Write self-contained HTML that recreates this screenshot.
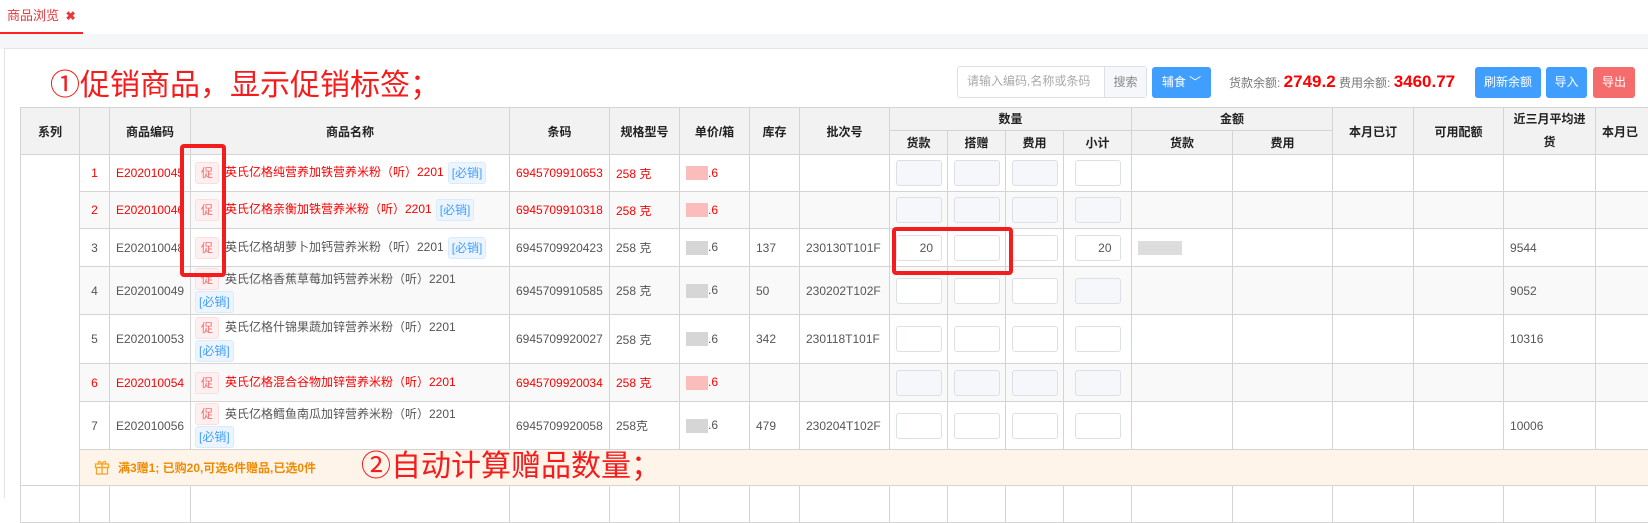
<!DOCTYPE html>
<html><head><meta charset="utf-8"><style>
*{box-sizing:border-box;margin:0;padding:0}
body{width:1648px;height:492px;overflow:hidden;background:#fff;font-family:"Liberation Sans","Noto Sans CJK SC",sans-serif;font-size:12px;color:#555;position:relative}
.abs{position:absolute}
.tab{left:7px;top:5px;color:#e8383d;font-size:13px}
.tabline{left:0;top:32px;width:83px;height:2px;background:#f22}
.band{left:0;top:34px;width:1648px;height:15px;background:#f5f6f8}
.panel{left:4px;top:48px;width:1650px;height:450px;border-left:1px solid #e3e3e3;border-top:1px solid #e3e3e3}
.ann{color:#f41c1c;font-size:30px;font-family:"Noto Sans CJK SC",sans-serif;line-height:1;white-space:nowrap}
table{position:absolute;left:20px;top:107px;border-collapse:collapse;table-layout:fixed;width:1640px}
td,th{border:1px solid #d4d4d4;padding:0 6px;white-space:nowrap;overflow:hidden;font-weight:normal;font-size:12px}
th{background:#f2f2f2;color:#222;font-weight:bold;text-align:center;height:22px}
td{height:37px}
tr.alt td{background:#f9f9f9}
tr.red td{color:#f00}
.c{text-align:center}
.cu{display:inline-block;width:24px;height:22px;line-height:20px;text-align:center;border:1px solid #fdd;background:#fef0f0;color:#f56c6c;border-radius:3px;vertical-align:middle;margin-right:6px;font-size:12px}
.bx{display:inline-block;height:22px;line-height:20px;padding:0 3px;border:1px solid #d9ecff;background:#ecf5ff;color:#409eff;border-radius:3px;vertical-align:middle;margin-left:4px}
.inp{display:block;width:46px;height:26px;border:1px solid #dcdfe6;border-radius:3px;background:#fff;text-align:right;padding-right:8px;line-height:24px;color:#555;margin:0 auto}
.g{background:#f5f7fa}
.blur{display:inline-block;width:22px;height:14px;background:#d6d6d6;vertical-align:middle}
.blurr{background:#fbbcbc}
.btn{top:67px;height:31px;line-height:31px;color:#fff;border-radius:3px;text-align:center;font-size:12px}
.rbox{border:4px solid #f41c1c;border-radius:4px}
</style></head><body>
<div class="abs tab">商品浏览 <span style="font-size:12px;font-weight:bold;margin-left:3px">✖</span></div>
<div class="abs tabline"></div>
<div class="abs band"></div>
<div class="abs panel"></div>
<div class="abs ann" style="left:50px;top:67px">①促销商品，显示促销标签；</div>

<div class="abs" style="left:957px;top:66px;width:190px;height:32px;border:1px solid #dcdfe6;border-radius:3px;background:#fff"></div>
<div class="abs" style="left:967px;top:73px;color:#aaa;font-size:12px;line-height:17px">请输入编码,名称或条码</div>
<div class="abs" style="left:1104px;top:67px;width:42px;height:30px;background:#f5f7fa;border-left:1px solid #dcdfe6;color:#888;text-align:center;line-height:30px">搜索</div>
<div class="abs btn" style="left:1152px;width:59px;background:#409eff">辅食 ﹀</div>
<div class="abs" style="left:1229px;top:73px;color:#777;white-space:nowrap;line-height:17px">货款余额: <b style="color:#f00;font-family:'Liberation Sans Narrow','Liberation Sans',sans-serif;font-size:17px">2749.2</b> 费用余额: <b style="color:#f00;font-family:'Liberation Sans Narrow','Liberation Sans',sans-serif;font-size:17px">3460.77</b></div>
<div class="abs btn" style="left:1475px;width:66px;background:#409eff">刷新余额</div>
<div class="abs btn" style="left:1546px;width:41px;background:#409eff">导入</div>
<div class="abs btn" style="left:1593px;width:42px;background:#f56c6c">导出</div>

<table>
<colgroup><col style="width:59px"><col style="width:30px"><col style="width:81px"><col style="width:319px"><col style="width:100px"><col style="width:70px"><col style="width:70px"><col style="width:50px"><col style="width:90px"><col style="width:58px"><col style="width:58px"><col style="width:58px"><col style="width:68px"><col style="width:101px"><col style="width:100px"><col style="width:81px"><col style="width:90px"><col style="width:92px"><col style="width:73px"></colgroup>
<tr><th rowspan="2">系列</th><th rowspan="2"></th><th rowspan="2">商品编码</th><th rowspan="2">商品名称</th><th rowspan="2">条码</th><th rowspan="2">规格型号</th><th rowspan="2">单价/箱</th><th rowspan="2">库存</th><th rowspan="2">批次号</th><th colspan="4">数量</th><th colspan="2">金额</th><th rowspan="2">本月已订</th><th rowspan="2">可用配额</th><th rowspan="2" style="white-space:normal;line-height:23px">近三月平均进货</th><th rowspan="2" style="text-align:left">本月已</th></tr>
<tr><th style="height:23px">货款</th><th>搭赠</th><th>费用</th><th>小计</th><th>货款</th><th>费用</th></tr>

<tr class="red"><td rowspan="8" style="background:#fff"></td><td class="c">1</td><td>E202010045</td><td style="padding-left:4px"><span class="cu">促</span>英氏亿格纯营养加铁营养米粉（听）2201<span class="bx">[必销]</span></td><td>6945709910653</td><td>258 克</td><td><span class="blur blurr"></span>.6</td><td></td><td></td><td><span class="inp g"></span></td><td><span class="inp g"></span></td><td><span class="inp g"></span></td><td><span class="inp"></span></td><td></td><td></td><td></td><td></td><td></td><td></td></tr>
<tr class="red alt"><td class="c">2</td><td>E202010046</td><td style="padding-left:4px"><span class="cu">促</span>英氏亿格亲衡加铁营养米粉（听）2201<span class="bx">[必销]</span></td><td>6945709910318</td><td>258 克</td><td><span class="blur blurr"></span>.6</td><td></td><td></td><td><span class="inp g"></span></td><td><span class="inp g"></span></td><td><span class="inp g"></span></td><td><span class="inp g"></span></td><td></td><td></td><td></td><td></td><td></td><td></td></tr>
<tr><td class="c" style="height:38px">3</td><td>E202010048</td><td style="padding-left:4px"><span class="cu">促</span>英氏亿格胡萝卜加钙营养米粉（听）2201<span class="bx">[必销]</span></td><td>6945709920423</td><td>258 克</td><td><span class="blur"></span>.6</td><td>137</td><td>230130T101F</td><td><span class="inp">20</span></td><td><span class="inp"></span></td><td><span class="inp"></span></td><td><span class="inp">20</span></td><td><span class="blur" style="width:44px;background:#ddd"></span></td><td></td><td></td><td></td><td>9544</td><td></td></tr>
<tr class="alt"><td class="c" style="height:48px">4</td><td>E202010049</td><td style="padding-left:4px;line-height:23px"><span class="cu">促</span>英氏亿格香蕉草莓加钙营养米粉（听）2201<br><span class="bx" style="margin-left:0">[必销]</span></td><td>6945709910585</td><td>258 克</td><td><span class="blur"></span>.6</td><td>50</td><td>230202T102F</td><td><span class="inp"></span></td><td><span class="inp"></span></td><td><span class="inp"></span></td><td><span class="inp g"></span></td><td></td><td></td><td></td><td></td><td>9052</td><td></td></tr>
<tr><td class="c" style="height:49px">5</td><td>E202010053</td><td style="padding-left:4px;line-height:23px"><span class="cu">促</span>英氏亿格什锦果蔬加锌营养米粉（听）2201<br><span class="bx" style="margin-left:0">[必销]</span></td><td>6945709920027</td><td>258 克</td><td><span class="blur"></span>.6</td><td>342</td><td>230118T101F</td><td><span class="inp"></span></td><td><span class="inp"></span></td><td><span class="inp"></span></td><td><span class="inp"></span></td><td></td><td></td><td></td><td></td><td>10316</td><td></td></tr>
<tr class="red alt"><td class="c" style="height:38px">6</td><td>E202010054</td><td style="padding-left:4px"><span class="cu">促</span>英氏亿格混合谷物加锌营养米粉（听）2201</td><td>6945709920034</td><td>258 克</td><td><span class="blur blurr"></span>.6</td><td></td><td></td><td><span class="inp g"></span></td><td><span class="inp g"></span></td><td><span class="inp g"></span></td><td><span class="inp g"></span></td><td></td><td></td><td></td><td></td><td></td><td></td></tr>
<tr><td class="c" style="height:48px">7</td><td>E202010056</td><td style="padding-left:4px;line-height:23px"><span class="cu">促</span>英氏亿格鳕鱼南瓜加锌营养米粉（听）2201<br><span class="bx" style="margin-left:0">[必销]</span></td><td>6945709920058</td><td>258克</td><td><span class="blur"></span>.6</td><td>479</td><td>230204T102F</td><td><span class="inp"></span></td><td><span class="inp"></span></td><td><span class="inp"></span></td><td><span class="inp"></span></td><td></td><td></td><td></td><td></td><td>10006</td><td></td></tr>
<tr><td colspan="18" style="height:36px;background:#fef4ea;color:#f08a00;font-weight:bold;padding-left:14px">
<svg width="16" height="16" viewBox="0 0 16 16" style="vertical-align:-3px;margin-right:8px"><g fill="none" stroke="#f5a623" stroke-width="1.3"><rect x="1.5" y="5" width="13" height="3.5"/><rect x="2.5" y="8.5" width="11" height="6.5"/><path d="M8 5v10M8 5C6 1 3 2 5 5M8 5c2-4 5-3 3 0"/></g></svg>满3赠1; 已购20,可选6件赠品,已选0件</td></tr>
<tr><td></td><td></td><td></td><td></td><td></td><td></td><td></td><td></td><td></td><td></td><td></td><td></td><td></td><td></td><td></td><td></td><td></td><td></td><td></td></tr>
</table>

<div class="abs ann" style="left:361px;top:448px">②自动计算赠品数量；</div>
<div class="abs rbox" style="left:180px;top:144px;width:46px;height:133px"></div>
<div class="abs rbox" style="left:892px;top:227px;width:121px;height:48px"></div>
</body></html>
